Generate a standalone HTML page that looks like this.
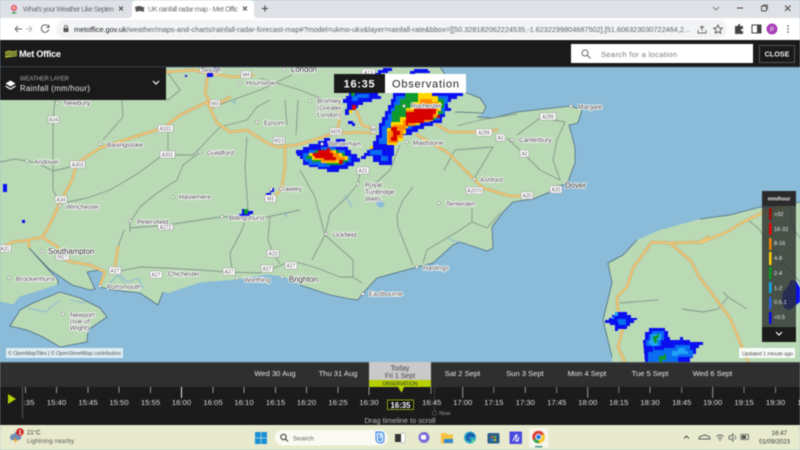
<!DOCTYPE html>
<html><head><meta charset="utf-8"><title>UK rainfall radar map - Met Office</title>
<style>
html,body{margin:0;padding:0;width:800px;height:450px;overflow:hidden;background:#8abbd8}
svg{display:block;filter:blur(.4px)}
text{font-family:"Liberation Sans",sans-serif}
.rd{fill:none;stroke:#c4a468;stroke-width:2.8;stroke-linejoin:round;stroke-linecap:round}
.ri{fill:none;stroke:#f0c878;stroke-width:1.8;stroke-linejoin:round;stroke-linecap:round}
.g{fill:none;stroke:#84978a;stroke-width:.9;stroke-linejoin:round}
.l text,text.l{font-size:6.6px;fill:#3c3c3c;stroke:#fff;stroke-width:1.6px;paint-order:stroke;stroke-linejoin:round}
.b text{font-size:7.8px;fill:#222;stroke:#fff;stroke-width:1.6px;paint-order:stroke;stroke-linejoin:round}
.d circle{fill:#fff;stroke:#777;stroke-width:.5;r:1.5px}
.s rect{fill:#fff;stroke:#999;stroke-width:.6}
.s text{font-size:5px;fill:#555;text-anchor:middle}
.r polygon,.r rect{shape-rendering:crispEdges}
.t text{font-size:7.7px;fill:#ddd;text-anchor:middle}
.day text{font-size:7.6px;fill:#e4e4e4;text-anchor:middle}
</style></head><body>
<svg width="800" height="450" viewBox="0 0 800 450" xmlns="http://www.w3.org/2000/svg">
<rect width="800" height="450" fill="#8abbd8"/>
<path fill="#bad9b5" d="M0 67H440L447 77 467 93 480 98 486 107 483 113 477 117 493 118 517 112 571 106 582 110 578 123 569 125 575 147 575 163 567 184 558 186 550 192 533 199 513 202 503 212 492 227 493 248 487 251 460 242 453 245 433 263 417 267 377 278 363 293 358 300 350 299 330 295 300 285 283 277 267 275 237 280 200 283 170 293 163 292 158 305 140 293 113 290 100 287 105 273 100 270 87 272 95 289 90 290 72 285 50 270 29 248 58 280 58 285 43 290 20 297 13 305 0 302Z"/>
<path fill="#bad9b5" stroke="#4c6b80" stroke-width=".8" d="M10 326 20 310 33 303 60 292 80 298 100 308 107 317 88 330 87 342 60 347 43 337 27 330Z"/>
<path fill="#bad9b5" d="M800 202 770 207 760 207 730 215 700 219 660 230 637 240 623 255 608 263 612 283 603 320 612 357 612 362H800Z"/>
<path fill="none" stroke="#4c6b80" stroke-width=".8" d="M440 67 447 77 467 93 480 98 486 107 483 113 455 112M477 117 493 118 517 112 571 106 582 110 578 123 569 125 575 147 575 163 567 184 558 186 550 192 533 199 513 202 503 212 492 227 493 248 487 251 460 242 453 245 433 263 417 267 377 278 363 293 358 300 350 299 330 295 300 285M29 248 50 270 72 285 90 290 95 289 87 272 100 270 105 273 100 287 113 290 140 293 158 305 163 292M29 248 58 280 58 285M637 240 623 255 608 263 612 283 603 320 612 357M800 202 770 207 760 207 730 215 700 219"/>
<path fill="none" stroke="#8abbd8" stroke-width="1" d="M0 302 13 305 20 297 43 290 58 285M170 293 200 283 237 280 267 275 283 277 300 285M345 195 352 207M447 237 453 241 460 242M120 275 128 282 138 278 143 288M110 283 118 275 125 284M28 308 45 312 60 300M70 300 85 303"/>
<path fill="#8abbd8" d="M376 202l5-1 4 3-3 4-5-2zM232 102l4-2-1 4zM285 212l3 5-3-1z"/>
<g class="g">
<path d="M55 100 53 120 53 190 60 203"/>
<path d="M0 162 15 159 37 163 53 171 70 167"/>
<path d="M168 132 168 153 160 157 140 172 127 180 110 190 87 198 63 203"/>
<path d="M168 155 193 155 220 127 247 120 257 107 270 100"/>
<path d="M200 152 183 165 177 180 157 193 140 207 130 222 130 232"/>
<path d="M247 137 245 167 248 210 242 230 230 253 232 270"/>
<path d="M122 100 123 117 103 140"/>
<path d="M115 272 140 267 167 268 200 270 227 272 260 273 287 263 300 263"/>
<path d="M130 228 167 225 220 217 267 217 300 210"/>
<path d="M124 230 118 247"/>
<path d="M270 217 268 240 273 253 280 264M285 100 287 125M298 100 296 135"/>
<path d="M166 70 180 90 168 100 140 86 120 100M213 107 260 90 292 75M260 78 300 90 325 100"/>
<path d="M358 184 347 197 330 213 325 235 353 260 353 277 362 283M315 197 325 235 312 260M300 263 317 268 340 277 353 277"/>
<path d="M413 187 403 200 397 215 398 227 413 265M472 208 472 222 457 232 427 250 423 263M472 222 487 228 500 213M300 170 315 197M360 170 358 184M400 145 390 170 368 190"/>
<path d="M507 138 527 157 540 170 560 180M517 135 540 118 565 122 557 140 553 160 560 180M493 147 475 177M457 126 480 120 517 114M444 170 455 150 493 147"/>
<path d="M620 303 658 300M682 309 703 312 718 309 728 297 723 292M728 297 747 309M748 220 758 228 783 262 800 282M790 208 793 228 800 238"/>
</g>
<g>
<path class="rd" d="M207 102 180 115 163 128 140 135 100 148 77 163 72 180 60 203 47 230 42 237 28 240 13 242 0 248M28 240 29 247M42 237 58 247 60 258 72 262 90 265 105 272 100 285M115 267 118 247M207 102 217 123 230 132 247 130 267 143 277 147 297 145 323 137 337 132 340 117 338 100M337 132 347 133 360 132 373 133M357 112 362 125 370 128M285 145 285 167 282 187 275 197M167 72 193 70 207 73 233 77 253 75M208 75 205 93 213 107 230 97M437 125 450 132 480 132 497 130M417 135 447 152 470 175 483 188 510 196 530 196M366 70 368 85M618 312 617 297 627 287 633 268 652 242 670 243 700 242 708 237M700 243 727 232 743 222 762 213 783 207M670 243 690 260 700 278 713 295 730 318 740 342 748 362M623 328 618 347 625 362"/>
<path class="ri" d="M207 102 180 115 163 128 140 135 100 148 77 163 72 180 60 203 47 230 42 237 28 240 13 242 0 248M28 240 29 247M42 237 58 247 60 258 72 262 90 265 105 272 100 285M115 267 118 247M207 102 217 123 230 132 247 130 267 143 277 147 297 145 323 137 337 132 340 117 338 100M337 132 347 133 360 132 373 133M357 112 362 125 370 128M285 145 285 167 282 187 275 197M167 72 193 70 207 73 233 77 253 75M208 75 205 93 213 107 230 97M437 125 450 132 480 132 497 130M417 135 447 152 470 175 483 188 510 196 530 196M366 70 368 85M618 312 617 297 627 287 633 268 652 242 670 243 700 242 708 237M700 243 727 232 743 222 762 213 783 207M670 243 690 260 700 278 713 295 730 318 740 342 748 362M623 328 618 347 625 362"/>
</g>
<g class="r">
<!-- Westerham cell -->
<polygon fill="#0a10f0" points="297,153 300,153 300,150 303,150 303,147 309,147 309,144 318,144 318,141 324,141 324,138 330,138 330,141 336,141 336,139 345,139 345,144 348,144 348,150 351,150 351,154 357,154 357,158 360,158 360,162 354,162 354,166 348,166 348,169 339,169 339,172 327,172 327,169 318,169 318,167 309,167 309,165 303,165 303,159 300,159 300,156 297,156"/>
<polygon fill="#0a6cf0" points="303,159 303,153 309,153 309,150 321,150 321,147 336,147 336,150 345,150 345,156 351,156 351,162 345,162 345,165 330,165 330,167 318,167 318,165 309,165 309,162 306,162"/>
<polygon fill="#0d9a2f" points="306,156 309,156 309,153 315,153 315,150 339,150 339,153 345,153 345,159 348,159 348,162 342,162 342,165 327,165 327,162 312,162 312,159 306,159"/>
<polygon fill="#ffd800" points="309,153 321,153 321,150 336,150 336,153 342,153 342,156 348,156 348,160 339,160 339,163 321,163 321,160 312,160 312,156 309,156"/>
<polygon fill="#ff8c00" points="312,153 324,153 324,150 333,150 333,153 339,153 339,157 345,157 345,160 336,160 336,162 321,162 321,159 314,159 314,156 312,156"/>
<polygon fill="#d80000" points="313,153 318,153 318,150 327,150 327,148 330,148 330,153 333,153 333,157 336,157 336,160 324,160 324,158 315,158 315,156 313,156"/>
<rect x="339" y="160" width="4" height="4" fill="#d80000"/>
<!-- Connecting cell -->
<polygon fill="#0a10f0" points="361,156 364,156 364,153 367,153 367,150 370,150 370,147 394,147 394,156 392,156 392,165 379,165 379,162 373,162 373,156 366,156 366,159 361,159"/>
<polygon fill="#0a6cf0" points="370,150 382,150 382,156 388,156 388,161 381,161 381,155 370,155"/>
<polygon fill="#ffd800" points="370,146 373,146 373,143 379,143 379,146 382,146 382,150 373,150 373,149 370,149"/>
<rect x="373" y="145" width="4" height="3" fill="#ff8c00"/>
<!-- Rochester cell -->
<polygon fill="#0a10f0" points="393,93 463,93 463,96 457,96 457,99 451,99 451,102 448,102 448,108 451,108 451,111 445,111 445,117 442,117 442,123 433,123 433,126 424,126 424,129 418,129 418,132 412,132 412,135 403,135 403,138 397,138 397,144 394,144 394,150 373,150 373,144 373,141 376,141 376,135 379,135 379,123 382,123 382,117 385,117 385,111 388,111 388,105 391,105 391,99 393,99"/>
<polygon fill="#0a6cf0" points="396,96 448,96 448,104 445,104 445,114 440,114 440,120 430,120 430,123 420,123 420,126 412,126 412,129 406,129 406,132 400,132 400,138 394,138 394,144 379,144 379,138 382,138 382,126 385,126 385,120 388,120 388,114 391,114 391,108 394,108 394,102 396,102"/>
<polygon fill="#0d9a2f" points="405,93 420,93 420,96 438,96 438,99 444,99 444,108 441,108 441,114 436,114 436,120 420,120 420,124 406,124 406,126 400,126 400,122 392,122 392,111 395,111 395,105 400,105 400,99 405,99"/>
<polygon fill="#ffd800" points="418,93 432,93 432,96 438,96 438,102 441,102 441,111 438,111 438,117 433,117 433,121 420,121 420,125 408,125 408,128 406,128 406,134 403,134 403,141 397,141 397,145 387,145 387,128 391,128 391,122 400,122 400,117 406,117 406,108 412,108 412,102 418,102"/>
<polygon fill="#ff8c00" points="420,99 432,99 432,102 438,102 438,111 436,111 436,118 430,118 430,122 415,122 415,126 406,126 406,130 403,130 403,138 398,138 398,143 388,143 388,131 393,131 393,125 403,125 403,120 406,120 406,110 414,110 414,105 420,105"/>
<polygon fill="#d80000" points="420,104 428,104 428,108 436,108 436,114 433,114 433,120 424,120 424,123 408,123 408,126 406,126 406,112 414,112 414,108 420,108"/>
<polygon fill="#d80000" points="391,127 397,127 397,131 400,131 400,135 397,135 397,141 391,141 391,137 393,137 393,131 391,131"/>
<rect x="437" y="115" width="3" height="3" fill="#d80000"/>
<rect x="440" y="111" width="3" height="3" fill="#0d9a2f"/>
<!-- NW chunk -->
<polygon fill="#0a10f0" points="343,99 346,99 346,96 349,96 349,93 378,93 378,96 381,96 381,99 372,99 372,102 363,102 363,105 358,105 358,108 352,108 352,112 349,112 349,115 345,115 345,109 347,109 347,103 343,103"/>
<polygon fill="#0a6cf0" points="352,96 357,96 357,94 369,94 369,98 358,98 358,101 352,101"/>
<rect x="352" y="105" width="4" height="5" fill="#d80000"/>
<rect x="349" y="110" width="3" height="3" fill="#ffd800"/>
<rect x="351" y="93" width="4" height="3" fill="#0d9a2f"/>
<rect x="348" y="121" width="5" height="3" fill="#0a10f0"/>
<rect x="352" y="123" width="3" height="3" fill="#0a10f0"/>
<!-- top bits -->
<polygon fill="#0a10f0" points="373,73 378,73 378,70 383,70 383,68 392,68 392,71 388,71 388,73 381,73 381,75 375,75"/>
<polygon fill="#0a10f0" points="410,71 414,71 414,69 428,69 428,71 430,71 430,73 415,73 415,74 410,74"/>
<rect x="207" y="73" width="6" height="4" fill="#0a10f0"/>
<rect x="213" y="67" width="7" height="5" fill="#0a10f0"/>
<rect x="185" y="75" width="2" height="2" fill="#0a10f0"/>
<!-- Billingshurst -->
<polygon fill="#0a10f0" points="239,214 242,214 242,209 246,209 246,211 253,211 253,214 250,214 250,217 246,217 246,219 242,219 242,217 239,217"/>
<rect x="244" y="209" width="4" height="5" fill="#0d9a2f"/>
<polygon fill="#0a10f0" points="266,193 270,193 270,191 272,191 272,188 274,188 274,192 271,192 271,196 266,196"/>
<rect x="296" y="150" width="4" height="4" fill="#0a10f0"/>
<rect x="3" y="184" width="4" height="8" fill="#0a10f0"/>
<rect x="22" y="220" width="3" height="3" fill="#0a10f0"/>
<!-- France -->
<polygon fill="#0a10f0" points="605,320 609,320 609,318 612,318 612,315 616,315 616,312 627,312 627,315 631,315 631,318 637,318 637,320 634,320 634,323 630,323 630,326 627,326 627,329 618,329 618,331 615,331 615,325 610,325 610,323 605,323"/>
<polygon fill="#1ea5f5" points="612,317 615,317 615,312 618,312 618,316 614,316 614,319 612,319"/>
<polygon fill="#0a6cf0" points="617,319 626,319 626,325 619,325"/>
<polygon fill="#0a10f0" points="643,340 645,340 645,332 649,332 649,328 665,328 665,331 668,331 668,337 670,337 670,340 680,340 680,337 683,337 683,340 690,340 690,342 703,342 703,345 699,345 699,348 696,348 696,354 693,354 693,358 690,358 690,362 645,362"/>
<polygon fill="#0a6cf0" points="646,340 649,340 649,334 652,334 652,331 664,331 664,340 661,340 661,346 654,346 654,350 664,350 664,348 675,348 675,345 690,345 690,350 693,350 693,357 678,357 678,362 648,362 648,352 653,352 653,346 646,346"/>
<polygon fill="#1ea5f5" points="649,340 651,340 651,334 661,334 661,340 658,340 658,346 651,346 651,344 649,344"/>
<polygon fill="#0d9a2f" points="653,336 657,336 657,334 659,334 659,338 657,338 657,343 654,343 654,340 653,340"/>
<polygon fill="#1ea5f5" points="672,351 678,351 678,348 685,348 685,351 688,351 688,354 678,354 678,356 672,356"/>
<polygon fill="#0d9a2f" points="659,356 664,356 664,354 666,354 666,360 662,360 662,362 659,362"/>
</g>
<g class="d">
<circle cx="57" cy="103"/><circle cx="100" cy="144"/><circle cx="27" cy="161"/><circle cx="200" cy="152"/><circle cx="257" cy="122"/><circle cx="271" cy="189"/><circle cx="173" cy="197"/><circle cx="60" cy="206"/><circle cx="222" cy="217"/><circle cx="130" cy="221"/><circle cx="42" cy="251"/><circle cx="9" cy="278"/><circle cx="100" cy="286"/><circle cx="237" cy="278"/><circle cx="282" cy="277"/><circle cx="63" cy="314"/><circle cx="358" cy="184"/><circle cx="439" cy="203"/><circle cx="326" cy="234"/><circle cx="417" cy="267"/><circle cx="363" cy="294"/><circle cx="571" cy="106"/><circle cx="512" cy="140"/><circle cx="474" cy="179"/><circle cx="558" cy="186"/><circle cx="407" cy="142"/><circle cx="322" cy="144"/><circle cx="404" cy="106"/><circle cx="284" cy="69"/><circle cx="310" cy="101"/><circle cx="240" cy="83"/><circle cx="201" cy="70"/>
</g>
<g class="s">
<rect x="48" y="116" width="11" height="7" rx="1"/><text x="53.500" y="121.500">A34</text>
<rect x="158" y="125" width="15" height="7" rx="1"/><text x="165.500" y="130.500">A331</text>
<rect x="160" y="151" width="15" height="7" rx="1"/><text x="167.500" y="156.500">A331</text>
<rect x="70" y="161" width="15" height="7" rx="1"/><text x="77.500" y="166.500">A303</text>
<rect x="55" y="196" width="12" height="7" rx="1"/><text x="61" y="201.500">A34</text>
<rect x="210" y="100" width="10" height="7" rx="1"/><text x="215" y="105.500">M3</text>
<rect x="241" y="71" width="10" height="7" rx="1"/><text x="246" y="76.500">M4</text>
<rect x="273" y="137" width="12" height="7" rx="1"/><text x="279" y="142.500">M23</text>
<rect x="265" y="195" width="11" height="7" rx="1"/><text x="270.500" y="200.500">M3</text>
<rect x="158" y="224" width="15" height="6" rx="1"/><text x="165.500" y="229">A272</text>
<rect x="0" y="245" width="11" height="7" rx="1"/><text x="5" y="250.500">A31</text>
<rect x="56" y="253" width="13" height="7" rx="1"/><text x="62.500" y="258.500">M27</text>
<rect x="109" y="267" width="12" height="7" rx="1"/><text x="115" y="272.500">A27</text>
<rect x="150" y="271" width="12" height="7" rx="1"/><text x="156" y="276.500">A27</text>
<rect x="223" y="268" width="12" height="7" rx="1"/><text x="229" y="273.500">A27</text>
<rect x="267" y="250" width="12" height="7" rx="1"/><text x="273" y="255.500">A23</text>
<rect x="261" y="265" width="12" height="7" rx="1"/><text x="267" y="270.500">A27</text>
<rect x="285" y="262" width="12" height="7" rx="1"/><text x="291" y="267.500">A27</text>
<rect x="466" y="187" width="17" height="7" rx="1"/><text x="474.500" y="192.500">A2070</text>
<rect x="521" y="192" width="12" height="7" rx="1"/><text x="527" y="197.500">A20</text>
<rect x="550" y="186" width="12" height="7" rx="1"/><text x="556" y="191.500">A20</text>
<rect x="540" y="113" width="16" height="7" rx="1"/><text x="548" y="118.500">A299</text>
<rect x="476" y="129" width="16" height="7" rx="1"/><text x="484" y="134.500">A299</text>
<rect x="496" y="134" width="9" height="7" rx="1"/><text x="500.500" y="139.500">A2</text>
<rect x="520" y="150" width="9" height="7" rx="1"/><text x="524.500" y="155.500">A2</text>
<rect x="330" y="128" width="12" height="7" rx="1"/><text x="336" y="133.500">M25</text>
<rect x="357" y="167" width="12" height="7" rx="1"/><text x="363" y="172.500">A21</text>
<rect x="371" y="126" width="5" height="7" rx="1"/><text x="373.500" y="131.500">M</text>
<rect x="362" y="69" width="13" height="7" rx="1"/><text x="368.500" y="74.500">A13</text>
</g>
<g class="l">
<text x="64" y="105">Newbury</text><text x="107" y="147">Basingstoke</text><text x="34" y="164">Andover</text><text x="207" y="155">Guildford</text><text x="264" y="125">Epsom</text><text x="278" y="191">Crawley</text><text x="179" y="199">Haslemere</text><text x="66" y="209">Winchester</text><text x="229" y="220">Billingshurst</text><text x="137" y="224">Petersfield</text><text x="16" y="281">Brockenhurst</text><text x="107" y="289">Portsmouth</text><text x="168" y="276">Chichester</text><text x="244" y="282">Worthing</text><text x="70" y="317">Newport</text><text x="70" y="323.500">(Isle of</text><text x="70" y="330">Wight)</text><text x="365" y="187">Royal</text><text x="365" y="194">Tunbridge</text><text x="365" y="201">Wells</text><text x="446" y="206">Tenterden</text><text x="333" y="237">Uckfield</text><text x="423" y="270">Hastings</text><text x="369" y="296">Eastbourne</text><text x="578" y="109">Margate</text><text x="519" y="142">Canterbury</text><text x="480" y="182">Ashford</text><text x="413" y="145">Maidstone</text><text x="328" y="146">Westerham</text><text x="411" y="108">Rochester</text><text x="201" y="72">Slough</text><text x="246" y="85">Hounslow</text><text x="317" y="103">Bromley</text><text x="317" y="110">(Greater</text><text x="317" y="117">London)</text>
</g>
<g class="b">
<text x="48" y="254">Southampton</text><text x="289" y="282">Brighton</text><text x="565" y="188">Dover</text><text x="291" y="72">London</text>
</g>
<rect x="6" y="348" width="117" height="10" fill="#fff" opacity=".72"/>
<text x="8" y="355" font-size="5.300" fill="#555" textLength="113">© OpenMapTiles | © OpenStreetMap contributors</text>
<rect x="739" y="348" width="56" height="10" fill="#fff" opacity=".9"/>
<text x="742" y="355.500" font-size="5.600" fill="#555" textLength="51">Updated 1 minute ago</text>
<!-- radar under legend -->
<polygon points="783,292 788,286 791,280 796,281 800,288 800,302 796,305 790,310 784,308 782,300" fill="#0a10f0"/>
<rect x="762" y="191" width="34" height="136" fill="#2d332e" opacity=".82"/>
<rect x="762" y="191" width="34" height="15" fill="#2a2a2a"/>
<rect x="762" y="327" width="34" height="15" fill="#1c1c1c"/>
<text x="779" y="200.500" font-size="5.300" font-weight="bold" fill="#eee" text-anchor="middle">mm/hour</text>
<g>
<rect x="769" y="208" width="2.500" height="12" fill="#a80a0a"/>
<rect x="769" y="223" width="2.500" height="12" fill="#f00000"/>
<rect x="769" y="238" width="2.500" height="12" fill="#f08000"/>
<rect x="769" y="252" width="2.500" height="13" fill="#ffd000"/>
<rect x="769" y="267" width="2.500" height="12" fill="#0a9a20"/>
<rect x="769" y="282" width="2.500" height="11" fill="#10a8e8"/>
<rect x="769" y="297" width="2.500" height="12" fill="#2a60e8"/>
<rect x="769" y="312" width="2.500" height="12" fill="#0808f0"/>
</g>
<g font-size="5.600" fill="#e8e8e8">
<text x="774" y="216">&gt;32</text><text x="774" y="231">16-32</text><text x="774" y="245">8-16</text><text x="774" y="260">4-8</text><text x="774" y="275">2-4</text><text x="774" y="290">1-2</text><text x="774" y="304">0.5-1</text><text x="774" y="319">&lt;0.5</text>
</g>
<path d="M776 332l3 3 3-3" fill="none" stroke="#fff" stroke-width="1.200"/>
<!-- tabs -->
<rect width="800" height="18" fill="#dee1e6"/>
<path d="M128 18q4 0 4-4V5q0-5 5-5H249q5 0 5 5v9q0 4 4 4Z" fill="#fff"/>
<circle cx="14" cy="8" r="3.200" fill="#e46a94"/><circle cx="14" cy="8" r="1.200" fill="#f4d04a"/><path d="M14 11v3M11.500 13h5" stroke="#4a9a4a" stroke-width="1"/>
<text x="23" y="11.500" font-size="7.200" fill="#6a6e72" textLength="91">What's your Weather Like Septen</text>
<path d="M119 6.500l4 4m0-4l-4 4" stroke="#444" stroke-width="1"/>
<path d="M135 7q4-2 8 0t1 0v5q-4-2-8 0z" fill="#555"/>
<text x="148" y="11.500" font-size="7.200" fill="#6a6e72" textLength="90">UK rainfall radar map - Met Offic</text>
<path d="M243 6.500l4 4m0-4l-4 4" stroke="#444" stroke-width="1"/>
<path d="M265 5.500v6m-3-3h6" stroke="#444" stroke-width="1.100"/>
<path d="M713 7l3 3 3-3" fill="none" stroke="#777" stroke-width=".9"/>
<path d="M737 8h6" stroke="#444" stroke-width="1"/>
<rect x="761.500" y="6" width="5" height="5" rx="1" fill="none" stroke="#444" stroke-width=".9"/><path d="M763 5h4.500v4.500" fill="none" stroke="#444" stroke-width=".7"/>
<path d="M785 5.500l5.500 5.500m0-5.500L785 11" stroke="#444" stroke-width="1"/>
<!-- address -->
<rect y="18" width="800" height="22" fill="#fff"/>
<rect x="56" y="20" width="671" height="18" rx="9" fill="#f1f3f4"/>
<path d="M15 29h7m-7 0l3-3m-3 3l3 3" fill="none" stroke="#666" stroke-width="1"/>
<path d="M32 29h-6m6 0l-3-3m3 3l-3 3" fill="none" stroke="#b8b8b8" stroke-width="1"/>
<path d="M48.600 27a3.800 3.800 0 1 0 .2 2.500M49 24.800v2.700h-2.700" fill="none" stroke="#666" stroke-width="1"/>
<rect x="63.500" y="28" width="5" height="4" fill="#555"/><path d="M64.500 28v-1a1.500 1.500 0 0 1 3 0v1" fill="none" stroke="#555" stroke-width=".8"/>
<text x="74" y="32" font-size="7.300" fill="#5f6368" textLength="616"><tspan fill="#202124">metoffice.gov.uk</tspan>/weather/maps-and-charts/rainfall-radar-forecast-map#?model=ukmo-ukv&amp;layer=rainfall-rate&amp;bbox=[[50.328182062224535,-1.6232299804687502],[51.606323030722464,2...</text>
<path d="M698 30v3h8v-3M702 31v-5m0 0l-2 2m2-2l2 2" fill="none" stroke="#666" stroke-width=".9"/>
<path d="M718 25l1.300 2.800 3 .4-2.200 2 .6 3-2.700-1.500-2.700 1.500.6-3-2.200-2 3-.4z" fill="none" stroke="#555" stroke-width=".9"/>
<path d="M735 26h3v-1.500a1.200 1.200 0 0 1 2 0V26h3v3h-1.500a1.200 1.200 0 0 0 0 2H743v3h-8z" fill="#444"/>
<rect x="752" y="25" width="9" height="8" fill="none" stroke="#444" stroke-width="1"/><rect x="757" y="25" width="4" height="8" fill="#444"/>
<circle cx="772" cy="29" r="5.500" fill="#a842b8"/><text x="772" y="31.500" font-size="6" fill="#fff" text-anchor="middle">P</text>
<g fill="#444"><circle cx="788" cy="26" r=".8"/><circle cx="788" cy="29" r=".8"/><circle cx="788" cy="32" r=".8"/></g>
<!-- header -->
<rect y="40" width="800" height="27" fill="#1a1a1a"/>
<rect y="66.500" width="800" height="1" fill="#54606a"/>
<path d="M5 52q3-2 6-1t6-1v6q-3 1-6 1t-6 1z" fill="#a8b83a"/>
<path d="M5 54q3-2 6-1t6-1M5 56q3-2 6-1t6-1" stroke="#1a1a1a" stroke-width=".6" fill="none"/>
<text x="19" y="57" font-size="9.200" font-weight="bold" fill="#fff" textLength="42">Met Office</text>
<rect x="571" y="44" width="182" height="19" fill="#fff"/>
<circle cx="585" cy="53" r="3" fill="none" stroke="#666" stroke-width="1"/><path d="M587.500 55.500l3 3" stroke="#666" stroke-width="1"/>
<text x="601" y="57" font-size="7.600" fill="#777" textLength="76">Search for a location</text>
<rect x="759.500" y="45.500" width="35" height="17" fill="none" stroke="#555"/>
<text x="777" y="56.500" font-size="7.200" font-weight="bold" fill="#eee" text-anchor="middle">CLOSE</text>
<!-- weather layer -->
<rect y="67" width="166" height="33" fill="#1a1a1a"/>
<path d="M5.500 83.500l5-3 5 3-5 3z" fill="#fff"/><path d="M5.500 86l5 3 5-3" fill="none" stroke="#fff" stroke-width="1.200"/>
<text x="20" y="80.500" font-size="6" fill="#a8a8a8" textLength="49">WEATHER LAYER</text>
<text x="20" y="91" font-size="7.800" fill="#eee" textLength="70">Rainfall (mm/hour)</text>
<path d="M153 81l3 3 3-3" fill="none" stroke="#fff" stroke-width="1.200"/>
<!-- time pill -->
<rect x="334" y="74" width="51" height="19" fill="#1a1a1a"/>
<rect x="385" y="74" width="81" height="19" fill="#fff"/>
<text x="359.500" y="87.500" font-size="11" font-weight="bold" fill="#fff" text-anchor="middle" letter-spacing=".7">16:35</text>
<text x="392" y="87.500" font-size="11" fill="#222" textLength="67">Observation</text>
<!-- timeline -->
<rect y="362" width="800" height="63" fill="#1b1b1b"/>
<rect y="362" width="800" height="25" fill="#2f2f2f"/>
<rect y="362" width="800" height=".8" fill="#54606a"/>
<rect x="369" y="362" width="62" height="18" fill="#c9c9c9"/>
<rect x="369" y="380" width="62" height="7" fill="#b4d000"/>
<text x="400" y="370.500" font-size="7" fill="#444" text-anchor="middle">Today</text>
<text x="400" y="378" font-size="7" fill="#444" text-anchor="middle">Fri 1 Sept</text>
<text x="400" y="385.500" font-size="5" fill="#333" text-anchor="middle">OBSERVATION</text>
<path d="M398 387h6l-2 5h-1z" fill="#b4d000"/>
<g class="day">
<text x="275" y="376">Wed 30 Aug</text><text x="338" y="376">Thu 31 Aug</text><text x="462.500" y="376">Sat 2 Sept</text><text x="525" y="376">Sun 3 Sept</text><text x="587" y="376">Mon 4 Sept</text><text x="650" y="376">Tue 5 Sept</text><text x="712.500" y="376">Wed 6 Sept</text>
</g>
<path d="M8 394v10l8-5z" fill="#b4d000"/>
<path d="M22.500 387v31" stroke="#666" stroke-width=".8"/>
<path d="M25.500 387v6M56.500 387v6M88 387v6M119 387v6M150.500 387v6M213 387v6M244 387v6M275.500 387v6M306.500 387v6M338 387v6M369 387v8" stroke="#bbb" stroke-width=".8"/>
<path d="M181.500 387v11" stroke="#eee" stroke-width="1"/>
<path d="M431 387v7M493.800 387v6M556.700 387v6M618.800 387v6M681.700 387v6M744 387v6M775.500 387v6" stroke="#999" stroke-width=".8"/>
<path d="M462.700 387v11M525.300 387v6M587.700 387v11M650 387v6M712.700 387v11" stroke="#999" stroke-width="1"/>
<path d="M434.500 387v27" stroke="#888" stroke-width=".6" stroke-dasharray="1 1"/>
<circle cx="434.500" cy="413" r="2.300" fill="#1b1b1b" stroke="#888" stroke-width=".5"/>
<text x="439" y="415" font-size="5.800" fill="#999">Now</text>
<g class="t">
<text x="29" y="405">:35</text><text x="56.500" y="405">15:40</text><text x="88" y="405">15:45</text><text x="119" y="405">15:50</text><text x="150.500" y="405">15:55</text><text x="181.500" y="405">16:00</text><text x="213" y="405">16:05</text><text x="244" y="405">16:10</text><text x="275.500" y="405">16:15</text><text x="306.500" y="405">16:20</text><text x="338" y="405">16:25</text><text x="369" y="405">16:30</text><text x="431.700" y="405">16:45</text><text x="462.700" y="405">17:00</text><text x="493.800" y="405">17:15</text><text x="525.300" y="405">17:30</text><text x="556.700" y="405">17:45</text><text x="587.700" y="405">18:00</text><text x="618.800" y="405">18:15</text><text x="650" y="405">18:30</text><text x="681.700" y="405">18:45</text><text x="712.700" y="405">19:00</text><text x="744" y="405">19:15</text><text x="775.500" y="405">19:30</text><text x="807" y="405">19:45</text>
</g>
<rect x="387.500" y="400" width="26" height="9.500" fill="#111" stroke="#9aaa10" stroke-width=".9"/>
<text x="400.500" y="407.800" font-size="7.800" font-weight="bold" fill="#fff" text-anchor="middle">16:35</text>
<text x="400" y="423" font-size="7.400" fill="#bbb" text-anchor="middle">Drag timeline to scroll</text>
<!-- taskbar -->
<rect y="425" width="800" height="25" fill="#e8eace"/>
<path d="M10 438q0-4 4-4 1-3 4-2 3 0 3 4 1 3-2 4h-8z" fill="#6f8fb8"/><path d="M15 438l-1.500 3h2l-1 3 3-4h-2l1-2z" fill="#f0a020"/>
<circle cx="20" cy="432" r="3.800" fill="#d02020"/><text x="20" y="434.500" font-size="6" font-weight="bold" fill="#fff" text-anchor="middle">1</text>
<text x="27" y="434.500" font-size="6" fill="#333">21°C</text>
<text x="27" y="443" font-size="6" fill="#555" textLength="47">Lightning nearby</text>
<g fill="#1a8fd8"><rect x="255" y="432" width="5.700" height="5.700"/><rect x="261.300" y="432" width="5.700" height="5.700"/><rect x="255" y="438.300" width="5.700" height="5.700"/><rect x="261.300" y="438.300" width="5.700" height="5.700"/></g>
<rect x="275" y="430" width="113" height="15.500" rx="7.700" fill="#fafaf2"/>
<circle cx="283.500" cy="437" r="2.700" fill="none" stroke="#333" stroke-width="1"/><path d="M285.500 439l2.500 2.500" stroke="#333" stroke-width="1"/>
<text x="293" y="440.500" font-size="6.600" fill="#666">Search</text>
<path d="M376 432h5q3 0 3 4v4q0 3-3 3-4 0-5-3z" fill="#cde4f8" stroke="#2a7ae0" stroke-width=".9"/><path d="M379 434v6l2 .5v-3" fill="none" stroke="#2a7ae0" stroke-width="1"/>
<rect x="395" y="434" width="6" height="8" fill="#333"/><rect x="401" y="433" width="4" height="10" fill="#fff" stroke="#888" stroke-width=".4"/>
<circle cx="424" cy="437.500" r="5.500" fill="#7a6ad8"/><rect x="421" y="435" width="5" height="4.500" rx="1" fill="#fff"/>
<path d="M441 433h5l1.500 1.500H453v9h-12z" fill="#f5c242"/><rect x="444" y="439" width="9" height="4" fill="#2a8ad8"/>
<circle cx="470" cy="437.500" r="6" fill="#2aa8c8"/><path d="M466 436q2-4 6-3 3 1 3 4h-6q0 3 4 3.500-5 1.500-7-1.500" fill="#1a5fb0"/><circle cx="473" cy="441" r="1.500" fill="#5ad88a"/>
<rect x="487.500" y="433" width="12" height="10.500" rx="1.500" fill="#2a5f8a"/><g><rect x="491" y="436" width="2" height="2" fill="#e05a2a"/><rect x="494" y="436" width="2" height="2" fill="#7ab82a"/><rect x="491" y="439" width="2" height="2" fill="#2a9ae0"/><rect x="494" y="439" width="2" height="2" fill="#f0c020"/></g>
<rect x="509.500" y="431.500" width="12.500" height="12.500" rx="1" fill="#4a4ae0"/><path d="M513 441l3-6h1l-1 6h2l1-4" fill="none" stroke="#fff" stroke-width="1"/>
<rect x="529" y="428" width="19.500" height="19.500" rx="1.500" fill="#f6f6ea"/>
<circle cx="538.500" cy="437" r="6.200" fill="#dd4030"/><path d="M538.500 437l-5.400 3a6.200 6.200 0 0 0 5.700 3.200z" fill="#2da84a"/><path d="M538.500 437l5.400-3a6.200 6.200 0 0 1-5.100 9.200z" fill="#f8c820"/><circle cx="538.500" cy="437" r="2.800" fill="#2a7ae8" stroke="#fff" stroke-width=".9"/>
<rect x="535" y="446" width="7.500" height="1.300" rx=".6" fill="#2a8a8a"/>
<path d="M684 438.500l2.500-2.500 2.500 2.500" fill="none" stroke="#444" stroke-width=".9"/>
<path d="M699 439q0-3 3-3 3-2 5 0 3 0 3 3z" fill="#e8eace" stroke="#555" stroke-width=".9"/>
<path d="M716.500 436.500q3.500-3 7 0M718 438.500q2-1.500 4 0" fill="none" stroke="#555" stroke-width=".9"/><circle cx="720" cy="440" r=".8" fill="#555"/>
<path d="M729 436h2l2-2v7l-2-2h-2z" fill="none" stroke="#555" stroke-width=".8"/><path d="M735 435.500q1.500 2 0 4" fill="none" stroke="#555" stroke-width=".7"/>
<rect x="741" y="434.500" width="7.500" height="5" rx=".8" fill="none" stroke="#444" stroke-width=".8"/><rect x="742" y="435.500" width="4" height="3" fill="#444"/>
<text x="787" y="435" font-size="6.200" fill="#333" text-anchor="end">16:47</text>
<text x="790" y="443.500" font-size="6.200" fill="#333" text-anchor="end">01/09/2023</text>
</svg>
</body></html>
